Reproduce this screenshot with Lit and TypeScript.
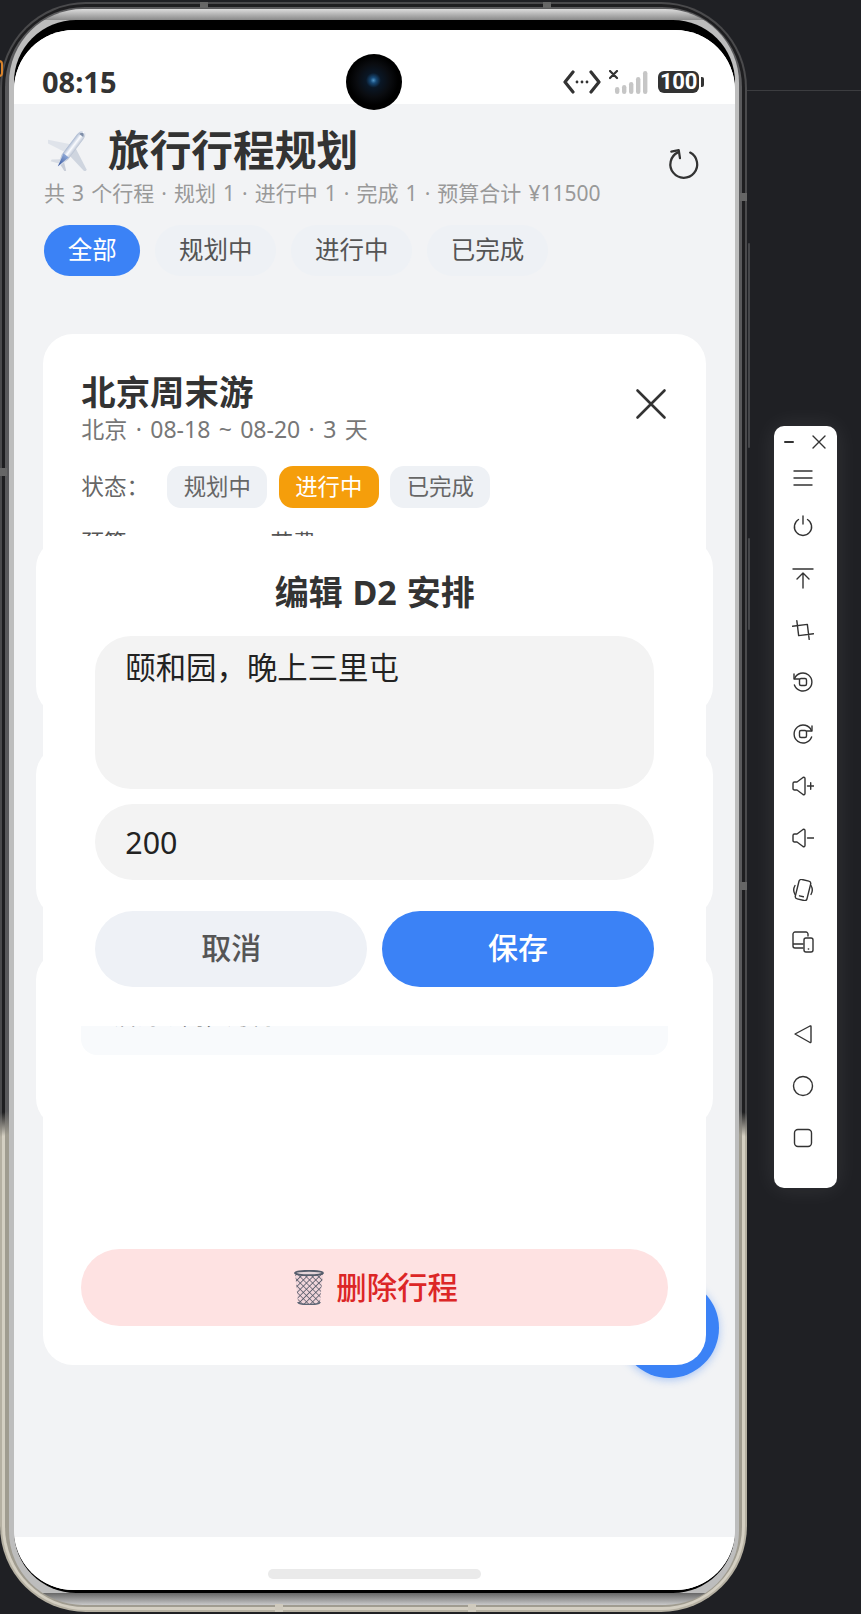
import { LitElement, html, css, svg } from "lit";
import { customElement } from "lit/decorators.js";

const FONT = css`"Noto Sans", "Noto Sans CJK SC", sans-serif`;

@customElement("app-root")
export class AppRoot extends LitElement {
  static styles = css`
    :host { display: block; width: 861px; height: 1614px; background: #1f2024; overflow: hidden; position: relative; font-family: ${FONT}; }
    * { box-sizing: border-box; }
    .desk { display: flex; align-items: flex-start; padding-top: 2px; height: 100%; }
    .hairline { position: absolute; left: 747px; right: 0; top: 90px; height: 1px; background: #3c3d40; }
    .ring { position: absolute; left: -5px; top: 60px; width: 8px; height: 17px; border: 2px solid #d9832b; border-radius: 4px; }
    .side { position: absolute; left: 748px; width: 2px; background: #46474a; border-radius: 1px; }
    .s1 { top: 243px; height: 205px; }
    .s2 { top: 538px; height: 92px; }
    .tick { position: absolute; background: #666; }
    .t1 { left: 200px; top: 2px; width: 8px; height: 6px; }
    .t2 { left: 543px; top: 2px; width: 8px; height: 6px; }
    .t3 { left: 740px; top: 193px; width: 7px; height: 8px; }
    .t4 { left: 0; top: 468px; width: 7px; height: 8px; }
    .t5 { left: 740px; top: 882px; width: 7px; height: 8px; }
    .t6 { left: 275px; top: 1604px; width: 8px; height: 8px; background: #cfcabd; }
    .t7 { left: 468px; top: 1604px; width: 8px; height: 8px; background: #cfcabd; }

    .phone { flex: none; width: 747px; height: 1610px; }
    .l1 { height: 100%; padding: 2px; border-radius: 86px; background: linear-gradient(180deg, #4a4a4c 0, #4a4a4c 69%, #b5b0a2 70.5%, #b5b0a2 100%); }
    .l2 { height: 100%; padding: 3px; border-radius: 84px; background: linear-gradient(180deg, #1e1e20 0, #1e1e20 69%, #d4cfc2 70.5%, #d4cfc2 100%); }
    .l3 { height: 100%; padding: 2px 3px 2px 4px; border-radius: 80px; background: linear-gradient(180deg, #5a5a5c 0, #5a5a5c 69%, #a09c90 70.5%, #a09c90 100%); }
    .l4 { height: 100%; padding: 11px 4px 12px 5px; border-radius: 74px;
      background: linear-gradient(180deg, #dcdcdc 0, #8a8a8a 11px, #bdbdbd 11px, #bdbdbd calc(100% - 12px), #666 calc(100% - 12px), #c9c9c9 100%); }
    .l5 { height: 100%; padding: 10px 0 3px; border-radius: 62px; background: #000; }
    .screen { position: relative; display: flex; flex-direction: column; height: 100%; background: #fff; border-radius: 60px; overflow: hidden; }

    .status { flex: none; height: 74px; padding: 30px 31px 0 28px; display: flex; align-items: center; justify-content: space-between; background: #fff; }
    .time { font-size: 29px; line-height: 44px; font-weight: 700; color: #333; }
    .indicators { display: flex; align-items: center; gap: 8px; height: 44px; }
    .battery { display: flex; align-items: center; gap: 2px; margin-left: 2px; }
    .cell { width: 41px; height: 22px; border-radius: 6px; background: #333; color: #fff; font: 700 22px/22px Roboto, sans-serif; text-align: center; letter-spacing: -0.3px; }
    .nub { width: 3px; height: 10px; border-radius: 0 2px 2px 0; background: #333; }
    .camera { position: absolute; left: 332px; top: 24px; width: 56px; height: 56px; border-radius: 50%;
      background: radial-gradient(circle at 49% 47%, #4f93c4 0, #174a78 7%, #0a1726 18%, #0a0c10 40%, #000 60%); z-index: 5; }

    .main { position: relative; flex: 1; min-height: 0; background: #f2f3f5; overflow: hidden; }
    .head { display: flex; align-items: center; justify-content: space-between; padding: 21px 34px 0 34px; height: 71px; }
    .brand { display: flex; align-items: center; gap: 16px; }
    .plane { width: 44px; height: 42px; flex: none; display: block; }
    h1 { margin: 0; font-size: 41.7px; line-height: 50px; font-weight: 700; color: #333; }
    .refresh { width: 33px; height: 33px; display: block; margin-top: 26px; }
    .sub { margin: 4px 0 0 30px; font-size: 21px; line-height: 28px; color: #999; white-space: nowrap; word-spacing: 1.6px; }
    .tabs { display: flex; gap: 15px; padding: 18px 0 0 30px; }
    .tab { height: 51px; padding: 0 23.7px; border-radius: 26px; font-size: 24.5px; line-height: 49px; color: #555; background: #eef1f5; }
    .tab.on { background: #3b82f6; color: #fff; }

    .list { position: absolute; left: 22px; top: 434px; width: 677px; display: flex; flex-direction: column; }
    .trip { height: 178px; border-radius: 30px; background: #fff; }
    .trip.b { height: 173px; margin-top: 29px; }
    .trip.c { margin-top: 32px; }
    .fab { position: absolute; left: 605px; top: 1174px; width: 100px; height: 100px; border-radius: 50%; background: #3b82f6; box-shadow: 0 2px 8px rgba(59,130,246,.4); }

    .sheet { position: absolute; left: 29.33px; top: 230px; width: 662.67px; height: 1031px; padding: 35px 38px 38px; border-radius: 30px; background: #fff; display: flex; flex-direction: column; }
    .sheet-title { margin: 0; font-size: 34.4px; line-height: 45px; font-weight: 700; color: #333; }
    .meta { font-size: 23px; line-height: 30px; color: #777; white-space: nowrap; word-spacing: 2.4px; }
    .close { position: absolute; left: 592px; top: 54px; width: 32px; height: 32px; display: block; }
    .state { display: flex; align-items: center; gap: 11.5px; margin-top: 22px; }
    .state-label { width: 74.5px; font-size: 22.6px; color: #666; line-height: 42px; }
    .chip { width: 100px; height: 42px; border-radius: 14px; background: #eef1f5; color: #666; font-size: 22.4px; line-height: 42px; text-align: center; }
    .chip.on { background: #f59e0b; color: #fff; }
    .budget { display: flex; gap: 144px; margin-top: 20px; font-size: 22.6px; line-height: 30px; color: #555; }
    .day { margin-top: 401px; height: 96px; padding: 0 33px 24px; border-radius: 16px; background: #f8fafc; display: flex; align-items: flex-end; font-size: 22.6px; line-height: 30px; color: #666; }
    .del { margin-top: 194px; height: 77px; padding: 0 0 4px 3px; border-radius: 39px; background: #fee2e2; color: #dc2626; font-size: 30.4px; font-weight: 500; display: flex; align-items: center; justify-content: center; gap: 12px; }
    .trash { width: 30px; height: 35px; display: block; margin-top: 4px; }

    .dialog { position: absolute; left: 29.33px; top: 432px; width: 662.67px; height: 490px; padding: 33px 52px 0; background: #fff; }
    .dialog-title { margin: 0; text-align: center; font-size: 34px; line-height: 46px; font-weight: 700; color: #333; word-spacing: 1px; }
    textarea, input { display: block; width: 100%; border: 0; outline: 0; margin: 0; background: #f3f3f3; color: #222; font-family: ${FONT}; font-size: 30.4px; resize: none; }
    textarea { margin-top: 21px; height: 153px; padding: 11px 30px; line-height: 42px; border-radius: 36px; }
    input { margin-top: 15px; height: 76px; padding: 0 30px; border-radius: 38px; }
    .actions { display: flex; gap: 15px; margin-top: 31px; }
    .btn { flex: 1; height: 76px; border-radius: 38px; font-size: 30px; line-height: 74px; text-align: center; background: #eef1f6; color: #555; font-weight: 500; }
    .btn.primary { background: #3b82f6; color: #fff; }

    .nav { flex: none; height: 53px; padding-top: 32px; background: #fff; }
    .home-bar { width: 213px; height: 10px; margin: 0 auto; border-radius: 5px; background: #eaeaea; }

    .tools { flex: none; margin: 424px 0 0 27px; width: 63px; height: 762px; border-radius: 10px; background: #fff; box-shadow: 0 0 24px rgba(255,255,255,.09); display: flex; flex-direction: column; align-items: center; }
    .tools-top { display: flex; justify-content: space-between; align-items: center; width: 100%; padding: 2px 11px 0 9px; height: 30px; flex: none; }
    .ti { height: 52px; margin-right: 5px; display: flex; align-items: center; justify-content: center; flex: none; }
    .ti.short { height: 44px; }
    .ti svg, .tools-top svg { display: block; fill: none; stroke: #333; stroke-width: 1.4; stroke-linecap: round; stroke-linejoin: round; }
    .tools-top svg.dash { stroke-width: 2; }
    .tool-gap { height: 40px; flex: none; }
  `;

  private tool(body: unknown, short = false) {
    return html`<div class="ti ${short ? "short" : ""}"><svg width="22" height="22" viewBox="0 0 22 22">${body}</svg></div>`;
  }

  render() {
    return html`
      <div class="hairline"></div>
      <div class="ring"></div>
      <div class="side s1"></div>
      <div class="side s2"></div>
      <div class="desk">
        <div class="phone"><div class="l1"><div class="l2"><div class="l3"><div class="l4"><div class="l5">
          <div class="screen">
            <div class="camera"></div>
            <div class="status">
              <div class="time">08:15</div>
              <div class="indicators">
                <svg width="38" height="24" viewBox="0 0 38 24" fill="none" stroke="#333" stroke-width="3.2" stroke-linecap="round" stroke-linejoin="round">
                  <path d="M10 2 2 12l8 10M28 2l8 10-8 10"/>
                  <g fill="#333" stroke="none"><circle cx="14" cy="12" r="1.4"/><circle cx="19" cy="12" r="1.4"/><circle cx="24" cy="12" r="1.4"/></g>
                </svg>
                <svg width="39" height="24" viewBox="0 0 39 24">
                  <path d="M1 1l7 7M8 1 1 8" stroke="#333" stroke-width="2.2" stroke-linecap="round"/>
                  <g fill="#c6c6c6">
                    <rect x="6" y="17" width="4.4" height="7" rx="2.2"/>
                    <rect x="13" y="15" width="4.4" height="9" rx="2.2"/>
                    <rect x="20" y="12" width="4.4" height="12" rx="2.2"/>
                    <rect x="27" y="7" width="4.4" height="17" rx="2.2"/>
                    <rect x="34" y="1" width="4.4" height="23" rx="2.2"/>
                  </g>
                </svg>
                <div class="battery"><div class="cell">100</div><div class="nub"></div></div>
              </div>
            </div>

            <div class="main">
              <div class="head">
                <div class="brand">
                  <svg class="plane" viewBox="0 0 44 42">
                    <defs>
                      <linearGradient id="fus" x1="0" y1="0" x2="1" y2="0"><stop offset="0" stop-color="#aab8d0"/><stop offset=".5" stop-color="#fbfcff"/><stop offset="1" stop-color="#b9c2d2"/></linearGradient>
                      <linearGradient id="blu" x1="0" y1="0" x2="0" y2="1"><stop offset="0" stop-color="#8ea8d6"/><stop offset="1" stop-color="#33539c"/></linearGradient>
                    </defs>
                    <g transform="translate(23 20) rotate(37)">
                      <path d="M-2 -4 -25 7-25 10-2 6Z" fill="#dfe3ea"/>
                      <path d="M2 -4 25 7 25 10 2 6Z" fill="#cfd5df"/>
                      <path d="M-1.5 14-9 20-9 22-1 19Z" fill="#d8dce4"/>
                      <path d="M1.5 14 9 20 9 22 1 19Z" fill="#c8cdd8"/>
                      <path d="M-4 -15C-4-20-1.5-22 0-22S4-20 4-15V10L0 24-4 10Z" fill="url(#fus)"/>
                      <path d="M-2.6 11-3.4 8H3.4L2.6 11 0 22Z" fill="url(#blu)"/>
                      <path d="M-2.5 -17C-2-19-1-20 0-20S2-19 2.5-17Z" fill="#7f8ea8"/>
                    </g>
                  </svg>
                  <h1>旅行行程规划</h1>
                </div>
                <svg class="refresh" viewBox="0 0 32 32" fill="none" stroke="#333" stroke-width="2.2" stroke-linecap="round" stroke-linejoin="round">
                  <path d="M21.5 5.4A13 13 0 1 1 9.5 5.2"/>
                  <path d="M3.2 4.4 10.4 3l1.2 7.8"/>
                </svg>
              </div>
              <div class="sub">共 3 个行程 · 规划 1 · 进行中 1 · 完成 1 · 预算合计 ¥11500</div>
              <div class="tabs">
                <div class="tab on">全部</div>
                <div class="tab">规划中</div>
                <div class="tab">进行中</div>
                <div class="tab">已完成</div>
              </div>

              <div class="list">
                <div class="trip"></div>
                <div class="trip b"></div>
                <div class="trip c"></div>
              </div>
              <div class="fab"></div>

              <div class="sheet">
                <h2 class="sheet-title">北京周末游</h2>
                <div class="meta">北京 · 08-18 ~ 08-20 · 3 天</div>
                <svg class="close" viewBox="0 0 32 32" stroke="#333" stroke-width="2.6" stroke-linecap="round"><path d="M2.5 2.5 29.5 29.5M29.5 2.5 2.5 29.5"/></svg>
                <div class="state">
                  <div class="state-label">状态：</div>
                  <div class="chip">规划中</div>
                  <div class="chip on">进行中</div>
                  <div class="chip">已完成</div>
                </div>
                <div class="budget"><span>预算</span><span>花费</span></div>
                <div class="day">后海胡同，烤鸭 ¥600</div>
                <div class="del">
                  <svg class="trash" viewBox="0 0 30 35">
                    <defs>
                      <pattern id="mesh" width="4.4" height="4.4" patternUnits="userSpaceOnUse" patternTransform="rotate(45)">
                        <rect width="4.4" height="4.4" fill="#f0d5da"/>
                        <path d="M0 0H4.4M0 0V4.4" stroke="#4b5260" stroke-width="1.5"/>
                      </pattern>
                    </defs>
                    <path d="M1 3H29L26 32C26 33.5 22 34.5 15 34.5S4 33.5 4 32Z" fill="url(#mesh)"/>
                    <path d="M4 32C4 33.5 8 34.5 15 34.5S26 33.5 26 32" fill="none" stroke="#5d6675" stroke-width="1.6"/>
                    <ellipse cx="15" cy="3" rx="14" ry="2.2" fill="#e5d5d9" stroke="#555d6b" stroke-width="1.8"/>
                  </svg>
                  <span>删除行程</span>
                </div>
              </div>

              <div class="dialog">
                <h3 class="dialog-title">编辑 D2 安排</h3>
                <textarea .value=${"颐和园，晚上三里屯"}></textarea>
                <input .value=${"200"} />
                <div class="actions">
                  <div class="btn">取消</div>
                  <div class="btn primary">保存</div>
                </div>
              </div>
            </div>

            <div class="nav"><div class="home-bar"></div></div>
          </div>
        </div></div></div></div></div></div>

        <div class="tools">
          <div class="tools-top">
            <svg class="dash" width="12" height="12" viewBox="0 0 12 12"><path d="M2 6H10"/></svg>
            <svg width="14" height="14" viewBox="0 0 14 14"><path d="M1 1 13 13M13 1 1 13"/></svg>
          </div>
          ${this.tool(svg`<path d="M2 4H20M2 11H20M2 18H20"/>`, true)}
          ${this.tool(svg`<path d="M6.5 4.5A8.6 8.6 0 1 0 15.5 4.5M11 1V9"/>`)}
          ${this.tool(svg`<path d="M1 2H21M11 21V6M5 12 11 6 17 12"/>`)}
          ${this.tool(svg`<g transform="rotate(-7 11 11)"><path d="M6 1V16H21M1 6H16V21"/></g>`)}
          ${this.tool(svg`<path d="M2.6 7.5A9 9 0 1 1 2.4 14"/><path d="M2 3V8H7"/><rect x="7.5" y="7.5" width="7" height="7" rx="1.5"/>`)}
          ${this.tool(svg`<path d="M19.4 7.5A9 9 0 1 0 19.6 14"/><path d="M20 3V8H15"/><rect x="7.5" y="7.5" width="7" height="7" rx="1.5"/>`)}
          ${this.tool(svg`<path d="M1 8.5C1 7.5 1.5 7 2.5 7H5L11 2.5C12 2 13 2.5 13 3.5V18.5C13 19.5 12 20 11 19.5L5 15H2.5C1.5 15 1 14.5 1 13.5Z"/><path d="M15.5 11H22M18.7 7.8V14.2"/>`)}
          ${this.tool(svg`<path d="M1 8.5C1 7.5 1.5 7 2.5 7H5L11 2.5C12 2 13 2.5 13 3.5V18.5C13 19.5 12 20 11 19.5L5 15H2.5C1.5 15 1 14.5 1 13.5Z"/><path d="M15.5 11H22"/>`)}
          ${this.tool(svg`<g transform="rotate(14 11 11)"><rect x="5" y="1" width="12" height="20" rx="2.5"/><path d="M9 17.5H13"/></g><path d="M3 6.5A9 9 0 0 0 3 15.5M19 6.5A9 9 0 0 1 19 15.5"/>`)}
          ${this.tool(svg`<path d="M16 5V3C16 2 15 1 14 1H3C2 1 1 2 1 3V15C1 16 2 17 3 17H11M1 13H11"/><rect x="12" y="7" width="9" height="14" rx="2"/><path d="M16.3 18H16.7"/>`)}
          <div class="tool-gap"></div>
          ${this.tool(svg`<path d="M18 3 3 11 18 19.5C18.6 19.7 19 19.3 19 18.8V3.6C19 3 18.6 2.7 18 3Z"/>`)}
          ${this.tool(svg`<circle cx="11" cy="11" r="9.5"/>`)}
          ${this.tool(svg`<rect x="2.5" y="2.5" width="17" height="17" rx="3.5"/>`)}
        </div>
      </div>
      <div class="tick t1"></div>
      <div class="tick t2"></div>
      <div class="tick t3"></div>
      <div class="tick t4"></div>
      <div class="tick t5"></div>
      <div class="tick t6"></div>
      <div class="tick t7"></div>
    `;
  }
}
